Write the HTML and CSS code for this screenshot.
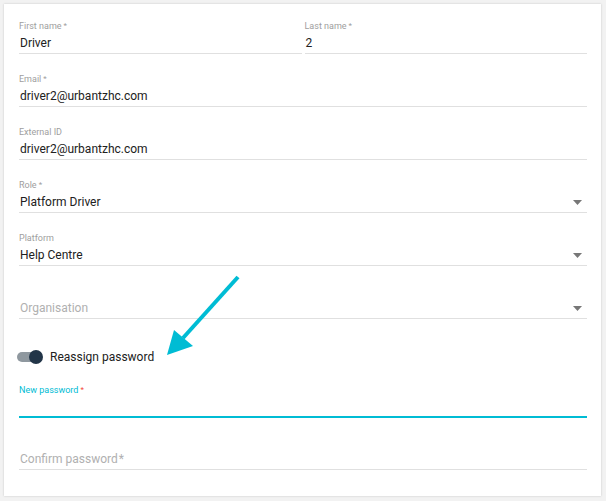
FILE: index.html
```html
<!DOCTYPE html>
<html>
<head>
<meta charset="utf-8">
<link rel="stylesheet" href="styles.css">
</head>
<body>
<div class="card">
  <div class="row">
    <div class="field">
      <div class="lbl">First name<span class="ast">*</span></div>
      <div class="val">Driver</div>
    </div>
    <div class="field">
      <div class="lbl">Last name<span class="ast">*</span></div>
      <div class="val">2</div>
    </div>
  </div>
  <div class="field">
    <div class="lbl">Email<span class="ast">*</span></div>
    <div class="val">driver2@urbantzhc.com</div>
  </div>
  <div class="field">
    <div class="lbl">External ID</div>
    <div class="val">driver2@urbantzhc.com</div>
  </div>
  <div class="field">
    <div class="lbl">Role<span class="ast">*</span></div>
    <div class="val select"><span>Platform Driver</span><svg class="caret" width="9" height="5" viewBox="0 0 9 5"><path d="M0 0H9L4.5 5Z" fill="#777"/></svg></div>
  </div>
  <div class="field">
    <div class="lbl">Platform</div>
    <div class="val select"><span>Help Centre</span><svg class="caret" width="9" height="5" viewBox="0 0 9 5"><path d="M0 0H9L4.5 5Z" fill="#777"/></svg></div>
  </div>
  <div class="field org">
    <div class="lbl"></div>
    <div class="val select placeholder"><span>Organisation</span><svg class="caret" width="9" height="5" viewBox="0 0 9 5"><path d="M0 0H9L4.5 5Z" fill="#777"/></svg></div>
  </div>
  <div class="toggle-row">
    <span class="toggle"><span class="track"></span><span class="thumb"></span></span>
    <span class="toggle-text">Reassign password</span>
  </div>
  <div class="field focused">
    <div class="lbl">New password<span class="ast red">*</span></div>
    <div class="val"></div>
  </div>
  <div class="field">
    <div class="lbl"></div>
    <div class="val placeholder">Confirm password<span class="ast2">*</span></div>
  </div>
  <svg class="arrow" width="606" height="501" viewBox="0 0 606 501">
    <line x1="238" y1="277" x2="183" y2="338" stroke="#00bcd4" stroke-width="4"/>
    <path d="M167 355 L174 330 L193 346 Z" fill="#00bcd4"/>
  </svg>
</div>
</body>
</html>
```
FILE: styles.css
```css
html, body {
  margin: 0;
  padding: 0;
  background: #f2f2f2;
  font-family: Roboto, "Liberation Sans", Arial, sans-serif;
}
.card {
  position: relative;
  margin: 4px 5px 5px 4px;
  width: 597px;
  height: 492px;
  box-sizing: border-box;
  background: #fff;
  box-shadow: 0 0 2px rgba(0,0,0,0.18);
  padding: 16px 14px 0 15px;
}
.row {
  display: grid;
  grid-template-columns: 1fr 1fr;
  column-gap: 3px;
}
.field {
  margin-bottom: 19px;
}
.lbl {
  height: 12px;
  line-height: 12px;
  font-size: 9px;
  color: #9e9e9e;
}
.ast {
  margin-left: 2px;
  font-size: 8px;
  vertical-align: top;
}
.ast.red { color: #f44336; }
.val {
  height: 20px;
  padding-top: 1px;
  line-height: 21px;
  font-size: 12px;
  color: #212121;
  border-bottom: 1px solid #e0e0e0;
  padding-left: 1px;
}
.select {
  display: flex;
  justify-content: space-between;
  align-items: center;
}
.caret { margin-right: 5px; }
.placeholder { color: #b0b0b0; }
.ast2 { margin-left: 1px; }
.org { margin-bottom: 28px; }
.toggle-row {
  display: flex;
  align-items: center;
  height: 20px;
  margin-bottom: 17px;
}
.toggle {
  position: relative;
  width: 27px;
  height: 14px;
  margin-left: -2px;
  margin-right: 6px;
}
.track {
  position: absolute;
  left: 0;
  top: 2px;
  width: 24px;
  height: 10px;
  border-radius: 5px;
  background: #8f989f;
}
.thumb {
  position: absolute;
  left: 12px;
  top: 0;
  width: 14px;
  height: 14px;
  border-radius: 50%;
  background: #223548;
}
.toggle-text {
  font-size: 12px;
  color: #212121;
}
.focused .lbl { color: #00bcd4; }
.focused .val {
  height: 19px;
  border-bottom: 2px solid #00bcd4;
}
.focused { margin-bottom: 18px; }
.arrow {
  position: absolute;
  left: -4px;
  top: -4px;
  pointer-events: none;
}
```
